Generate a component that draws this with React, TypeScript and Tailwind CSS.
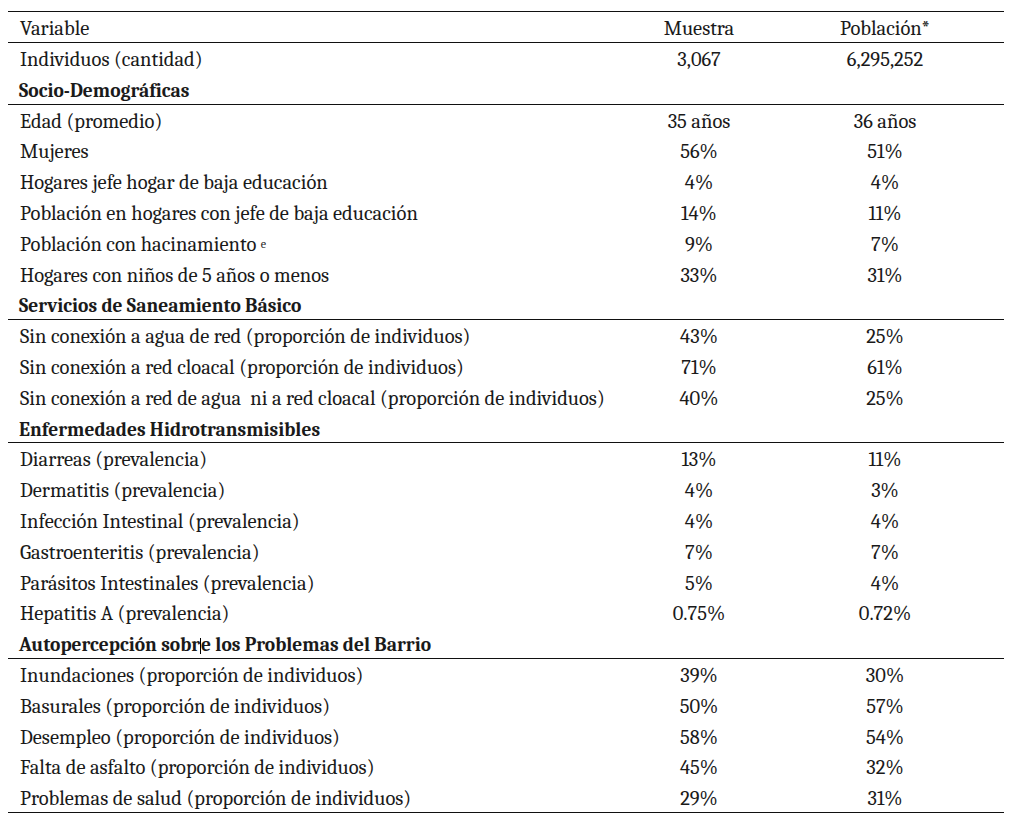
const rows: { label: React.ReactNode; m?: string; p?: string; head?: boolean; line?: boolean }[] = [
  { label: "Individuos (cantidad)", m: "3,067", p: "6,295,252" },
  { label: "Socio-Demográficas", head: true, line: true },
  { label: "Edad (promedio)", m: "35 años", p: "36 años" },
  { label: "Mujeres", m: "56%", p: "51%" },
  { label: "Hogares jefe hogar de baja educación", m: "4%", p: "4%" },
  { label: "Población en hogares con jefe de baja educación", m: "14%", p: "11%" },
  {
    label: (
      <>
        Población con hacinamiento <sup className="text-[12px] relative -top-[3px]">e</sup>
      </>
    ),
    m: "9%",
    p: "7%",
  },
  { label: "Hogares con niños de 5 años o menos", m: "33%", p: "31%" },
  { label: "Servicios de Saneamiento Básico", head: true, line: true },
  { label: "Sin conexión a agua de red (proporción de individuos)", m: "43%", p: "25%" },
  { label: "Sin conexión a red cloacal (proporción de individuos)", m: "71%", p: "61%" },
  { label: "Sin conexión a red de agua\u00a0 ni a red cloacal (proporción de individuos)", m: "40%", p: "25%" },
  { label: "Enfermedades Hidrotransmisibles", head: true, line: true },
  { label: "Diarreas (prevalencia)", m: "13%", p: "11%" },
  { label: "Dermatitis (prevalencia)", m: "4%", p: "3%" },
  { label: "Infección Intestinal (prevalencia)", m: "4%", p: "4%" },
  { label: "Gastroenteritis (prevalencia)", m: "7%", p: "7%" },
  { label: "Parásitos Intestinales (prevalencia)", m: "5%", p: "4%" },
  { label: "Hepatitis A (prevalencia)", m: "0.75%", p: "0.72%" },
  {
    label: (
      <>
        Autopercepción sobr
        <span className="inline-block w-px h-[16px] bg-black align-[-3px]" />e los Problemas del Barrio
      </>
    ),
    head: true,
    line: true,
  },
  { label: "Inundaciones (proporción de individuos)", m: "39%", p: "30%" },
  { label: "Basurales (proporción de individuos)", m: "50%", p: "57%" },
  { label: "Desempleo (proporción de individuos)", m: "58%", p: "54%" },
  { label: "Falta de asfalto (proporción de individuos)", m: "45%", p: "32%" },
  { label: "Problemas de salud (proporción de individuos)", m: "29%", p: "31%", line: true },
];

export default function App() {
  return (
    <div className="min-h-screen bg-white pt-[11px] px-[8px] text-[#1a1a1a] font-serif text-[20.5px]">
      <div className="w-[996px]">
        <div className="grid grid-cols-[624px_134px_238px] h-[32px] pt-[2px] border-y border-[#111] items-center">
          <span className="pl-[12px]">Variable</span>
          <span className="text-center">Muestra</span>
          <span className="text-center">Población*</span>
        </div>
        {rows.map((r, i) => (
          <div
            key={i}
            className={`grid grid-cols-[624px_134px_238px] h-[30.8px] pt-[2px] items-center ${r.line ? "border-b border-[#111]" : ""}`}
          >
            <span className={`whitespace-nowrap ${r.head ? "font-bold text-[19.5px] pl-[11px]" : "pl-[12px]"}`}>{r.label}</span>
            <span className="text-center">{r.m}</span>
            <span className="text-center">{r.p}</span>
          </div>
        ))}
      </div>
    </div>
  );
}
